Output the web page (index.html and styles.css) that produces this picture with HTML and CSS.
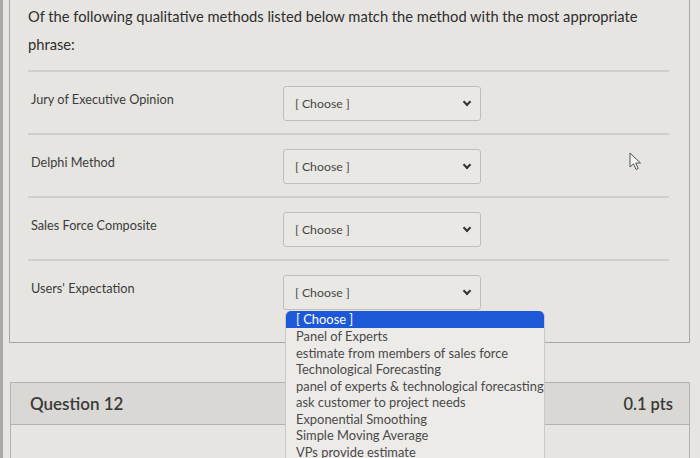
FILE: index.html
```html
<!DOCTYPE html>
<html lang="en">
<head>
    <meta charset="UTF-8">
    <meta name="viewport" content="width=device-width, initial-scale=1.0">
    <title>Quiz - Question 11</title>
    <link rel="stylesheet" href="styles.css">
</head>
<body>
    <div class="page">
        <div class="question-box">
            <p class="question-text">Of the following qualitative methods listed below match the method with the most appropriate phrase:</p>

            <div class="match-row">
                <span class="match-label">Jury of Executive Opinion</span>
                <div class="select">[ Choose ]<span class="chevron"></span></div>
            </div>
            <div class="match-row">
                <span class="match-label">Delphi Method</span>
                <div class="select">[ Choose ]<span class="chevron"></span></div>
            </div>
            <div class="match-row">
                <span class="match-label">Sales Force Composite</span>
                <div class="select">[ Choose ]<span class="chevron"></span></div>
            </div>
            <div class="match-row last">
                <span class="match-label">Users' Expectation</span>
                <div class="select-wrap">
                    <div class="select">[ Choose ]<span class="chevron"></span></div>
                    <ul class="dropdown">
                        <li class="selected">[ Choose ]</li>
                        <li>Panel of Experts</li>
                        <li>estimate from members of sales force</li>
                        <li>Technological Forecasting</li>
                        <li>panel of experts &amp; technological forecasting</li>
                        <li>ask customer to project needs</li>
                        <li>Exponential Smoothing</li>
                        <li>Simple Moving Average</li>
                        <li>VPs provide estimate</li>
                    </ul>
                </div>
            </div>
        </div>

        <div class="question-header">
            <h2>Question 12</h2>
            <span class="points">0.1 pts</span>
        </div>
        <div class="question-body"></div>

        <!-- mouse pointer in the photo -->
        <svg class="cursor" viewBox="0 0 14 20" fill="#f4f4f2" stroke="#555" stroke-width="1" stroke-linejoin="round">
            <path d="M1 1 L1 15 L4.5 11.8 L7 17.5 L9.2 16.5 L6.8 11 L11.5 11 Z"></path>
        </svg>
    </div>
</body>
</html>
```

FILE: styles.css
```css
:root {
    --page-bg: #e6e5e1;
    --border: #bdbcb8;
    --rule: #cfcecb;
    --text-primary: #2e2e2e;
    --text-secondary: #3c3c3c;
    --highlight: #1d58d6;
}

* {
    margin: 0;
    padding: 0;
    box-sizing: border-box;
}

body {
    font-family: Lato, 'Open Sans', Arial, sans-serif;
    background-color: var(--page-bg);
    color: var(--text-primary);
    height: 458px;
    overflow: hidden;
}

.page {
    position: relative;
    height: 100%;
    padding-left: 9px;
    border-left: 3px solid #a9a8a4;
    width: 690px;
}

.question-box {
    width: 681px;
    margin-left: -3px;
    border: 1px solid #a7a6a2;
    border-top: none;
    padding: 2px 20px 32px 18px;
}

.question-text {
    font-size: 14.7px;
    line-height: 28px;
    color: var(--text-primary);
    padding-bottom: 12px;
    border-bottom: 2px solid var(--rule);
}

.match-row {
    display: flex;
    align-items: flex-start;
    padding: 14px 0 14px 3px;
    height: 63px;
    border-bottom: 2px solid var(--rule);
}

.match-row.last {
    border-bottom: none;
    height: 49px;
}

.match-label {
    width: 252px;
    font-size: 12.7px;
    color: var(--text-secondary);
    padding-top: 5px;
}

.select-wrap {
    position: relative;
}

.select {
    position: relative;
    width: 198px;
    height: 35px;
    border: 1px solid #bfbebb;
    border-radius: 3px;
    background: #e9e8e5;
    font-size: 12.3px;
    color: #464646;
    padding: 9px 0 0 11px;
}

.chevron {
    position: absolute;
    right: 10px;
    top: 12px;
    width: 6px;
    height: 6px;
    border-right: 2px solid #333;
    border-bottom: 2px solid #333;
    transform: rotate(45deg);
}

.dropdown {
    position: absolute;
    left: 2px;
    top: 36px;
    width: 260px;
    list-style: none;
    background: #ecebe8;
    border: 1px solid #c9c8c4;
    border-top: none;
    border-radius: 5px 5px 0 0;
    font-size: 12.9px;
    color: #4a4a4a;
    z-index: 2;
}

.dropdown li {
    height: 16.5px;
    line-height: 16.5px;
    padding-left: 10px;
    white-space: nowrap;
}

.dropdown li.selected {
    background: var(--highlight);
    color: #fff;
    border-radius: 5px 5px 0 0;
    height: 17px;
}

.question-header {
    display: flex;
    justify-content: space-between;
    align-items: center;
    width: 680px;
    margin-top: 39px;
    margin-left: -2px;
    height: 43px;
    background: #d9d8d4;
    border: 1px solid #b3b2ae;
    padding: 0 16px 0 19px;
}

.question-header h2 {
    font-size: 17px;
    font-weight: 600;
    color: #3a3a3a;
}

.points {
    font-size: 16.5px;
    font-weight: 600;
    color: #3a3a3a;
}

.question-body {
    width: 680px;
    margin-left: -2px;
    height: 40px;
    border-left: 1px solid #b3b2ae;
    border-right: 1px solid #b3b2ae;
}

.cursor {
    position: absolute;
    left: 626px;
    top: 152px;
    width: 14px;
    height: 20px;
}
```
